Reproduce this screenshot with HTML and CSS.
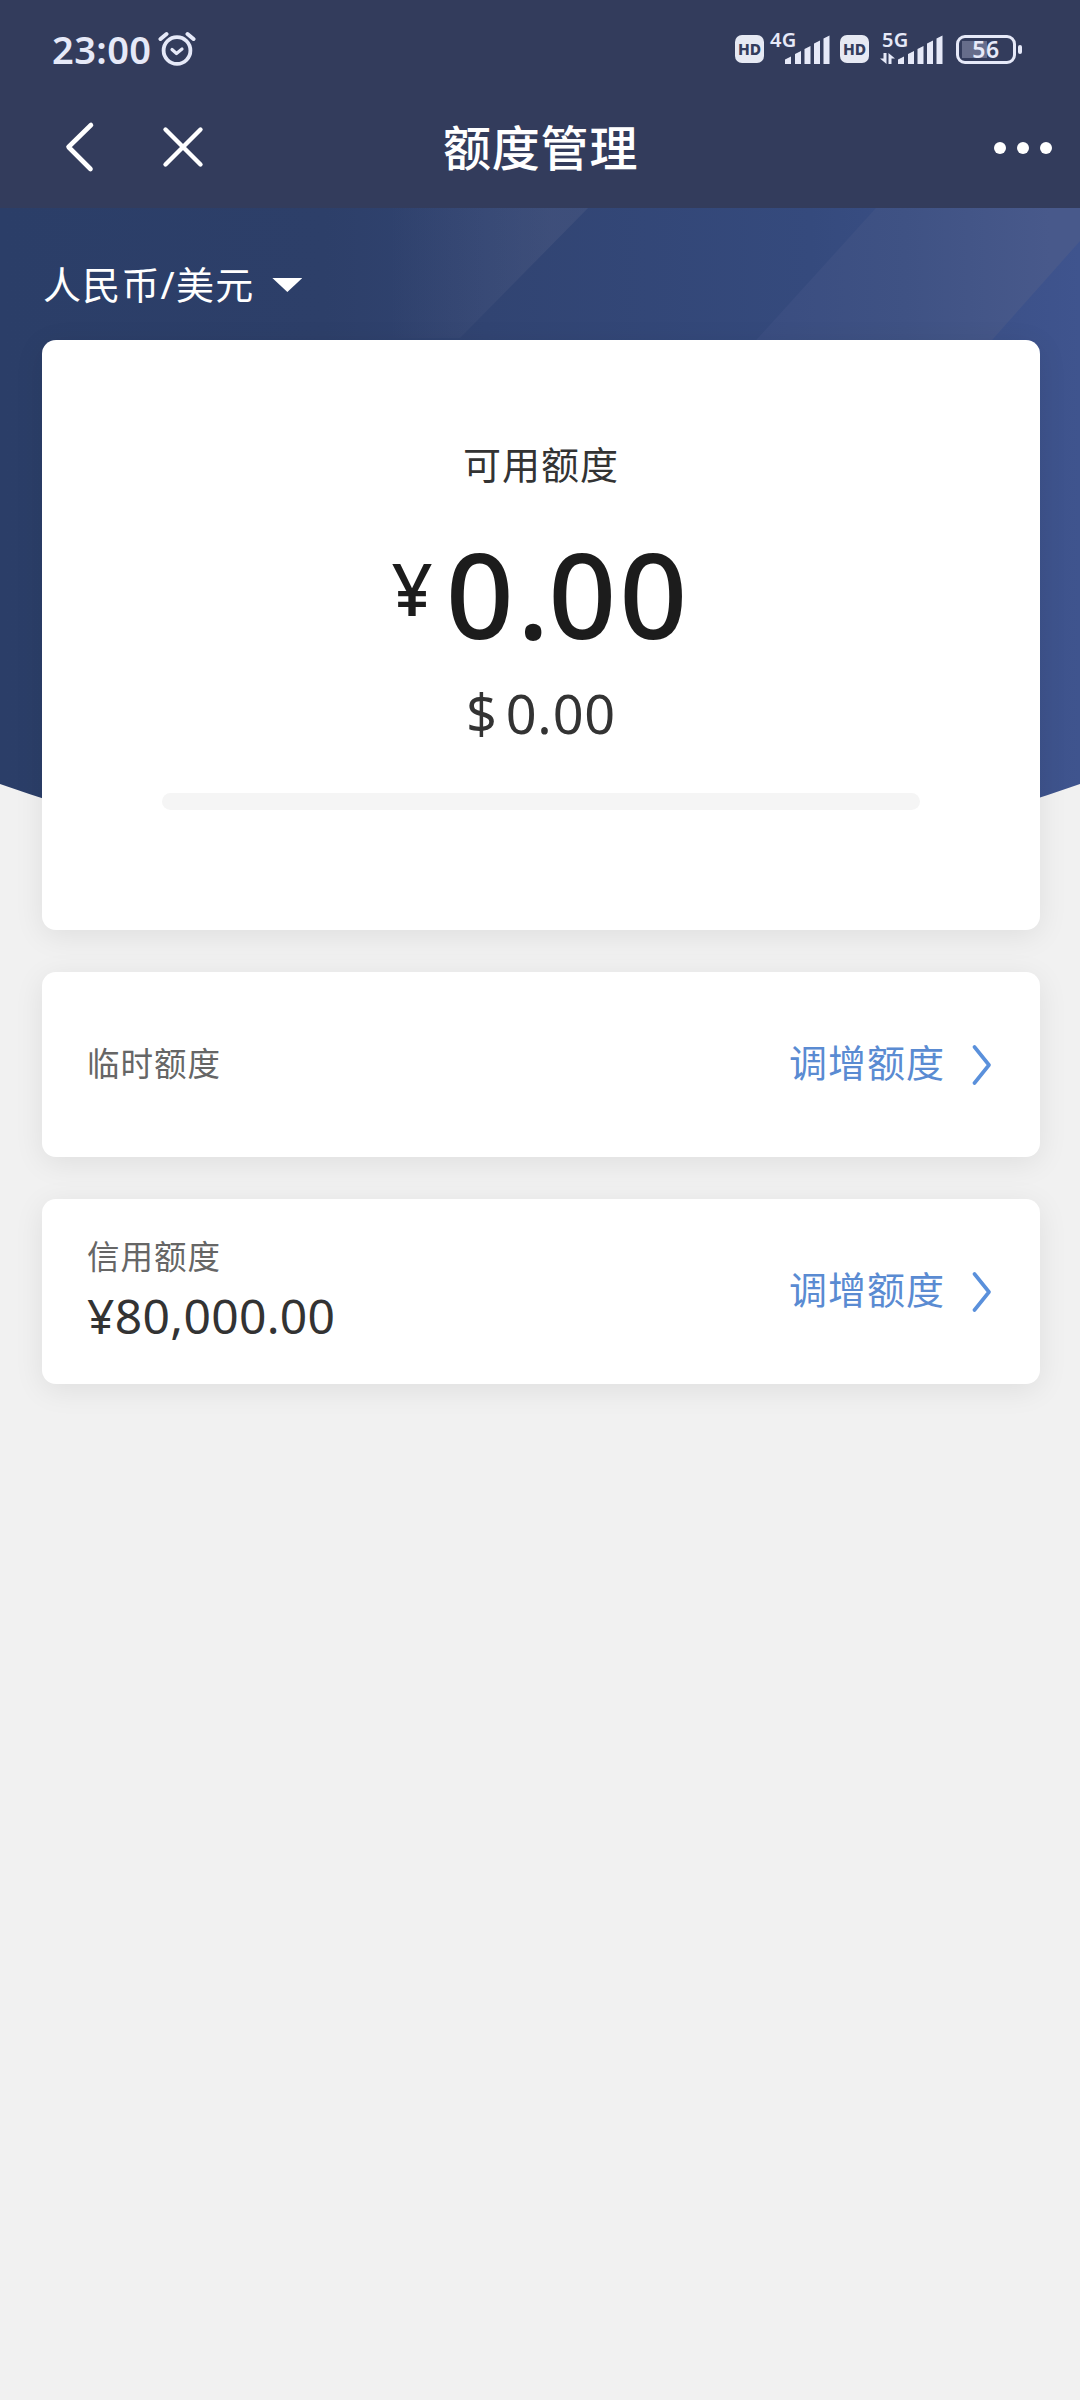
FILE: index.html
```html
<!DOCTYPE html>
<html lang="zh-CN">
<head>
<meta charset="utf-8">
<title>额度管理</title>
<link rel="stylesheet" href="styles.css">
</head>
<body>
<header class="header">
  <div class="status">
    <div class="status-left">
      <span class="clock">23:00</span>
      <svg class="alarm" width="38" height="36" viewBox="0 0 38 36" fill="none" stroke="#e6e9f8" stroke-linecap="round" stroke-linejoin="round">
        <circle cx="19" cy="19.500" r="13.400" stroke-width="3.800"/>
        <path d="M2.500 8 8.500 3M29.500 3 35.500 8" stroke-width="4"/>
        <path d="M14 18.500 18.500 22.500 24 18" stroke-width="3.200"/>
      </svg>
    </div>
    <div class="status-right">
      <span class="hd">HD</span>
      <div class="signal">
        <span class="net">4G</span>
        <svg class="bars" width="46" height="30" viewBox="0 0 46 30" fill="#e6e9f8">
          <path d="M1 24.500 7 21.500V29H1zM11 19 17 16V29H11zM20.500 14 26.500 11V29H20.500zM30 8.500 36 5.500V29H30zM39.500 3.500 45.500 .5V29H39.500z"/>
        </svg>
      </div>
      <span class="hd">HD</span>
      <div class="signal signal-second">
        <span class="net">5G</span>
        <svg class="arrows" width="15" height="11" viewBox="0 0 15 11" fill="#e6e9f8">
          <path d="M3.500 0H6.500V11L0 5.500H3.500zM8.500 11V0L15 5.500H11.500V11z"/>
        </svg>
        <svg class="bars" width="46" height="30" viewBox="0 0 46 30" fill="#e6e9f8">
          <path d="M1 24.500 7 21.500V29H1zM11 19 17 16V29H11zM20.500 14 26.500 11V29H20.500zM30 8.500 36 5.500V29H30zM39.500 3.500 45.500 .5V29H39.500z"/>
        </svg>
      </div>
      <div class="battery"><span class="level">56</span></div>
      <span class="battery-tip"></span>
    </div>
  </div>
  <nav class="nav">
    <svg class="back" width="30" height="52" viewBox="0 0 30 52" fill="none" stroke="#fff" stroke-width="4.600" stroke-linecap="round" stroke-linejoin="round"><path d="M26 4 3.500 26 25.500 48"/></svg>
    <svg class="close" width="42" height="42" viewBox="0 0 42 42" fill="none" stroke="#fff" stroke-width="4.400" stroke-linecap="round"><path d="M3.500 3.500 38.500 38.500M38.500 3.500 3.500 38.500"/></svg>
    <h1 class="title">额度管理</h1>
    <div class="more"><i></i><i></i><i></i></div>
  </nav>
</header>
<main class="page">
  <svg class="backdrop" width="1080" height="642" viewBox="0 0 1080 642" aria-hidden="true">
    <defs>
      <linearGradient id="base" x1="0" y1="0" x2="1" y2="0"><stop offset="0" stop-color="#2b3e68"/><stop offset=".3" stop-color="#2d3f69"/><stop offset=".45" stop-color="#314472"/><stop offset=".75" stop-color="#354a7d"/><stop offset="1" stop-color="#3f548e"/></linearGradient>
      <linearGradient id="bandA" gradientUnits="userSpaceOnUse" x1="390" y1="0" x2="550" y2="0"><stop offset="0" stop-color="#5c6689" stop-opacity="0"/><stop offset="1" stop-color="#5c6689" stop-opacity=".28"/></linearGradient>
      <linearGradient id="bandC" gradientUnits="userSpaceOnUse" x1="760" y1="0" x2="1050" y2="0"><stop offset="0" stop-color="#3a4d80"/><stop offset=".5" stop-color="#3f5284"/><stop offset="1" stop-color="#48598b"/></linearGradient>
      <clipPath id="hero"><path d="M0 0H1080V576Q540 766 0 576z"/></clipPath>
    </defs>
    <g clip-path="url(#hero)">
      <path fill="url(#base)" d="M0 0H1080V642H0z"/>
      <path fill="url(#bandA)" d="M380 0H588L460 130H300z"/>
      <path fill="url(#bandC)" d="M876 0H1080V33L976 150H740z"/>
    </g>
  </svg>
  <div class="currency"><span>人民币/美元</span><i class="caret"></i></div>
  <section class="card summary">
    <div class="label">可用额度</div>
    <div class="amount"><span class="yen">¥</span><span class="value">0<span class="point">.</span>00</span></div>
    <div class="usd"><span>$</span><span>0.00</span></div>
    <div class="progress"></div>
  </section>
  <section class="card row">
    <div class="info"><div class="name">临时额度</div></div>
    <a class="adjust"><span>调增额度</span><svg class="chevron" width="20" height="42" viewBox="0 0 20 42" fill="none" stroke="#5a90db" stroke-width="3.600" stroke-linecap="round" stroke-linejoin="round"><path d="M2.500 3 17 21 2.500 39"/></svg></a>
  </section>
  <section class="card row">
    <div class="info"><div class="name">信用额度</div><div class="limit">¥80,000.00</div></div>
    <a class="adjust"><span>调增额度</span><svg class="chevron" width="20" height="42" viewBox="0 0 20 42" fill="none" stroke="#5a90db" stroke-width="3.600" stroke-linecap="round" stroke-linejoin="round"><path d="M2.500 3 17 21 2.500 39"/></svg></a>
  </section>
</main>
</body>
</html>
```
FILE: styles.css
```css
* { box-sizing: border-box; }
body {
  margin: 0;
  width: 1080px;
  min-height: 2400px;
  background: #f1f1f1;
  color: #333;
  font-family: "Noto Sans", "Noto Sans CJK SC", sans-serif;
}
svg { display: block; flex: none; }
.header { height: 208px; background: #333c5c; color: #fff; }
.status {
  height: 98px;
  padding: 0 59px 0 52px;
  display: flex;
  justify-content: space-between;
  color: #e6e9f8;
}
.status-left, .status-right { display: flex; }
.clock { width: 98px; margin-top: 23px; font-size: 38px; line-height: 52px; font-weight: 600; letter-spacing: .4px; white-space: nowrap; }
.alarm { margin: 31px 0 0 8px; }
.status-right { margin-right: -1px; }
.hd {
  width: 29px;
  height: 28px;
  margin-top: 35px;
  border-radius: 7px;
  background: #e6e9f3;
  color: #333c5c;
  font-size: 15.5px;
  line-height: 29px;
  font-weight: 800;
  text-align: center;
}
.signal { position: relative; width: 61px; height: 34px; margin: 31px 10px 0 5px; }
.net { position: absolute; left: 1px; top: -3px; font-size: 20px; line-height: 24px; font-weight: 600; letter-spacing: .3px; }
.signal .bars { position: absolute; right: 0; bottom: 0; }
.signal-second { width: 63px; margin: 31px 13px 0 11px; }
.signal-second .net { left: 2px; }
.arrows { position: absolute; left: 0; bottom: 1px; }
.battery {
  width: 60px;
  height: 29px;
  margin-top: 35px;
  border: 3px solid #e6e9f8;
  border-radius: 9px;
  background: linear-gradient(#666d8b, #666d8b) 3px 3px / 25px 17px no-repeat;
  text-align: center;
}
.level { font-size: 23px; line-height: 23px; font-weight: 600; display: block; letter-spacing: .5px; }
.battery-tip { width: 4px; height: 9px; margin: 45px 0 0 2px; border-radius: 2px; background: #e6e9f8; }
.nav { height: 110px; padding: 0 28px 0 65px; display: flex; align-items: flex-start; }
.back { margin-top: 23px; }
.close { margin: 28px 0 0 67px; }
.title { width: 196px; margin: 14px 0 0 239px; font-size: 48px; line-height: 72px; font-weight: 500; letter-spacing: .8px; white-space: nowrap; }
.more { display: flex; gap: 11px; margin: 44px 0 0 auto; }
.more i { width: 12px; height: 12px; border-radius: 50%; background: #fff; }
.page { position: relative; padding: 0 40px 0 42px; }
.backdrop { position: absolute; left: 0; top: 0; z-index: -1; }
.currency { height: 132px; padding: 48px 0 0 1px; display: flex; color: #fff; font-size: 38px; line-height: 56px; letter-spacing: 1.2px; white-space: nowrap; }
.caret { width: 30px; height: 14px; margin: 22px 0 0 18px; background: #fff; clip-path: polygon(0 0, 100% 0, 50% 100%); }
.card { background: #fff; border-radius: 14px; box-shadow: 0 6px 30px rgba(0, 0, 0, .08); }
.summary { height: 590px; display: flex; flex-direction: column; align-items: center; }
.label { margin-top: 95px; font-size: 38px; line-height: 58px; letter-spacing: 1px; }
.amount { height: 130px; margin-top: 38px; display: flex; gap: 13px; color: #1c1c1c; font-weight: 500; }
.yen { margin-top: 20px; font-size: 72px; line-height: 74px; }
.value { margin-top: -3px; font-size: 119px; line-height: 130px; letter-spacing: 3px; }
.point { letter-spacing: -1px; }
.usd { margin-top: 20px; display: flex; gap: 8px; font-size: 54px; line-height: 64px; letter-spacing: .8px; }
.progress { width: 758px; height: 17px; margin-top: 48px; border-radius: 9px; background: #f5f5f5; }
.row { height: 185px; margin-top: 42px; padding: 0 48px 0 45px; display: flex; align-items: center; justify-content: space-between; }
.name { padding-bottom: 2px; color: #666; font-size: 32.5px; line-height: 46px; letter-spacing: 1px; }
.limit { font-size: 48px; line-height: 67px; letter-spacing: .3px; }
.adjust { display: flex; align-items: center; gap: 27px; color: #5a8bd2; font-size: 38px; line-height: 54px; letter-spacing: 1px; }
.adjust span { padding-bottom: 5px; }
```
